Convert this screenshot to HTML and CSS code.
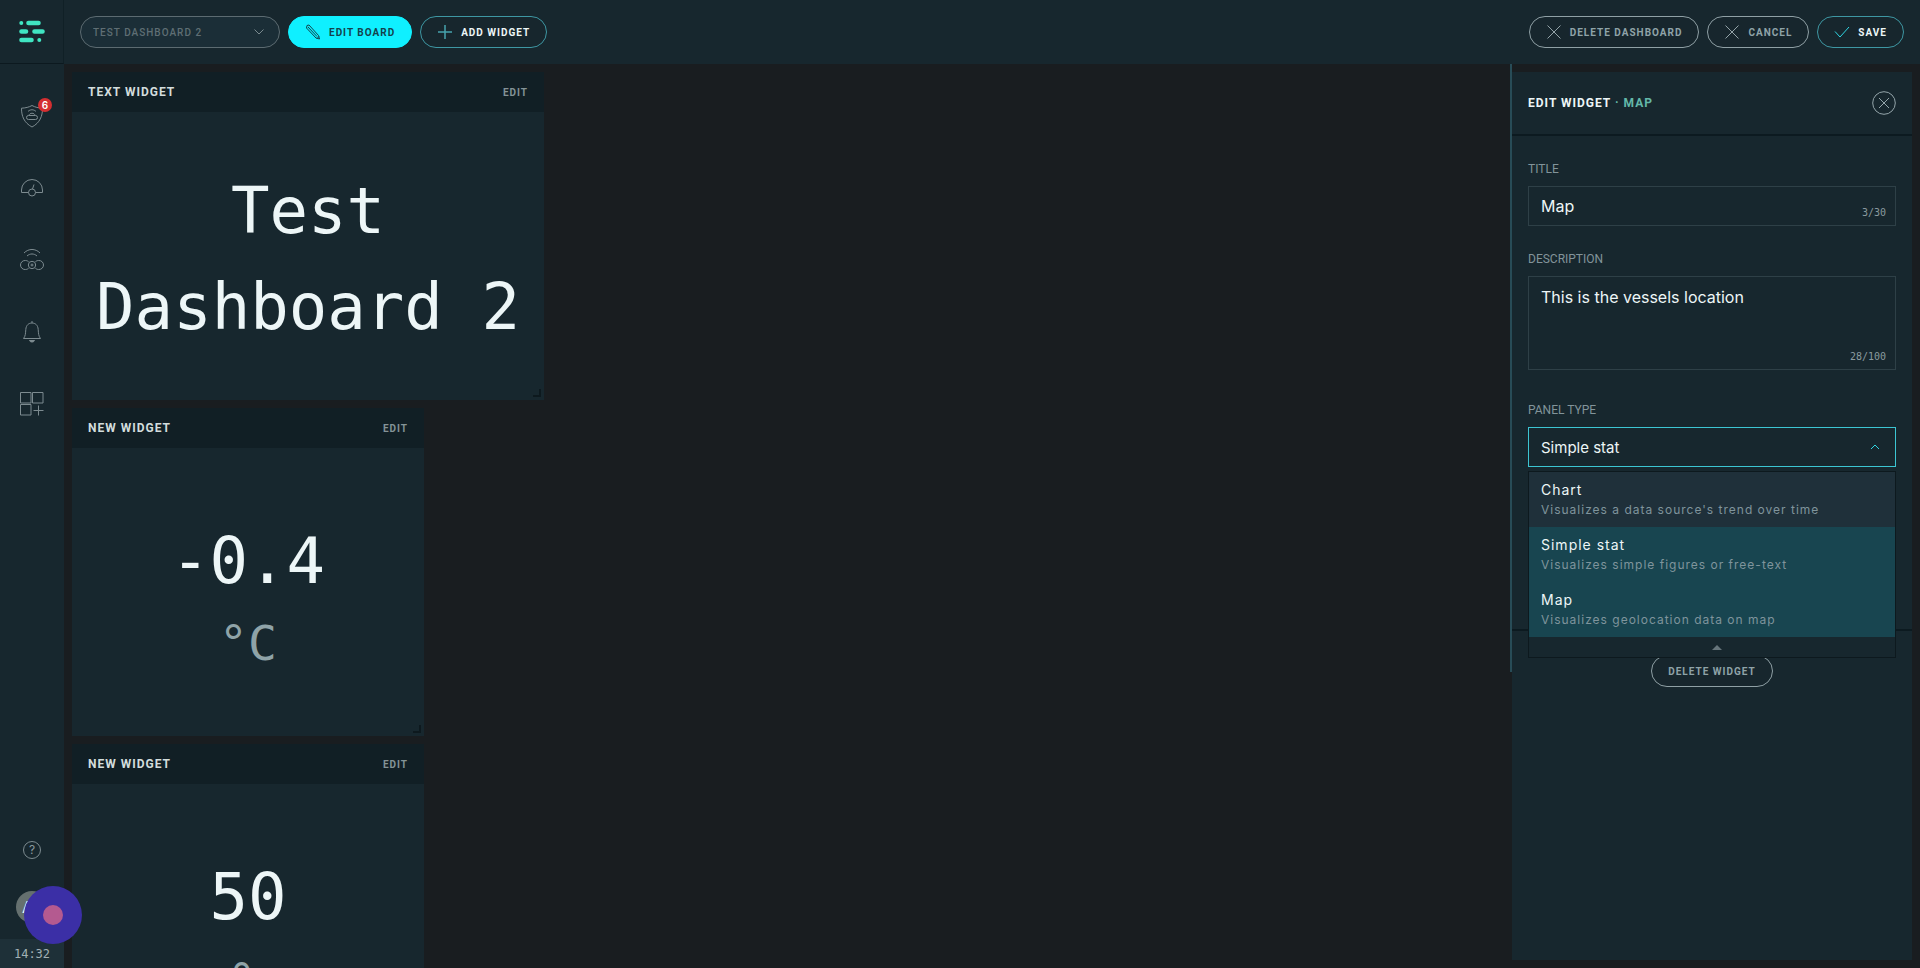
FILE: index.html
```html
<!DOCTYPE html>
<html lang="en">
<head>
<meta charset="utf-8">
<meta name="viewport" content="width=device-width, initial-scale=1">
<title>Test Dashboard 2</title>
<link rel="stylesheet" href="styles.css">
</head>
<body>
<div class="app">
  <aside class="sidebar">
    <a class="logo" href="#" aria-label="Home">
      <svg width="26" height="24" viewBox="0 0 26 24" fill="none" stroke="#40e5c2" stroke-width="4.600" stroke-linecap="round">
        <path d="M9.500 3h10M2.500 11.500h4.500M15.500 11.500h8M2.500 20h10"/>
        <path stroke-width="4" d="M2.300 3h0M20.300 20h0"/>
      </svg>
    </a>
    <nav class="nav" aria-label="Main">
      <a class="nav-link" href="#" aria-label="Security">
        <svg class="icon" width="24" height="24" viewBox="0 0 24 24">
          <path d="M12 1.500C9 3.200 5.500 4 1.500 4.200c0 8 2.500 14.500 10.500 18.800 8-4.300 10.500-10.800 10.500-18.800C18.500 4 15 3.200 12 1.500z"/>
          <rect x="6.500" y="11.500" width="11" height="4" rx="2"/>
          <path d="M9 11.500c.2-3 5.800-3 6 0M8 7.500c2-2.300 6-2.300 8 0"/>
        </svg>
        <span class="badge">6</span>
      </a>
      <a class="nav-link" href="#" aria-label="Performance">
        <svg class="icon" width="24" height="24" viewBox="0 0 24 24">
          <path d="M8.500 16.500H1.500v-2.500a10.500 10.500 0 0 1 21 0v2.500h-7"/>
          <circle cx="12" cy="16.500" r="3.500"/><path d="M12.500 13l1.500-4.500"/>
        </svg>
      </a>
      <a class="nav-link" href="#" aria-label="Devices">
        <svg class="icon" width="24" height="24" viewBox="0 0 24 24">
          <path d="M4 5c4.500-4.700 11.500-4.700 16 0M7 8c3-2.700 7-2.700 10 0"/>
          <path d="M8.500 13.500C6.500 12.300 5.500 12.500 5 12.500a4.500 4.500 0 0 0 0 9c.5 0 1.500.2 3.500-1M15.500 13.500c2-1.200 3-1 3.500-1a4.500 4.500 0 0 1 0 9c-.5 0-1.500.2-3.500-1"/>
          <circle cx="12" cy="17" r="3.700"/><circle cx="12" cy="17" r="1"/>
        </svg>
      </a>
      <a class="nav-link" href="#" aria-label="Alerts">
        <svg class="icon" width="24" height="24" viewBox="0 0 24 24">
          <path d="M3.500 18.500h17c-2-2.500-2-5-2.300-9-.3-4.500-3-6.500-6.200-6.500s-5.900 2-6.200 6.500c-.3 4-.3 6.500-2.300 9zM12 3V1"/>
          <path d="M9.500 20.500c.8 2 4.200 2 5 0z" fill="#7d8b90"/>
        </svg>
      </a>
      <a class="nav-link" href="#" aria-label="Dashboards">
        <svg class="icon" width="24" height="24" viewBox="0 0 24 24">
          <path d="M.5.500h10.500v10.500H.500zM12.500.500h10.500v10.500H12.500zM.5 12.500h10.500v10.500H.500zM18.500 13.500v10M13.500 18.500h10"/>
        </svg>
      </a>
    </nav>
    <div class="side-foot">
      <a class="help" href="#" aria-label="Help">?</a>
      <a class="avatar" href="#" aria-label="Account">A</a>
      <time class="clock">14:32</time>
    </div>
    <button class="record" type="button" aria-label="Record"><span class="record-dot"></span></button>
  </aside>

  <header class="toolbar">
    <div class="board-picker">
      <select class="board-select" aria-label="Dashboard" disabled><option>TEST DASHBOARD 2</option></select>
      <svg class="picker-arrow" width="10" height="6" viewBox="0 0 10 6"><path d="M.5.500l4.500 4.500 4.500-4.500"/></svg>
    </div>
    <button class="btn btn-primary" type="button">
      <svg class="btn-icon" width="16" height="16" viewBox="0 0 16 16"><path d="M2 1.500L4 1l9.500 10.500 1 3.500-3.500-1L1.500 4zM3 3l9 9.500M12 14.500l2-2"/></svg>Edit board</button>
    <button class="btn btn-accent" type="button">
      <svg class="btn-icon" width="16" height="16" viewBox="0 0 16 16"><path d="M8 1v14M1 8h14" stroke-width="1.500"/></svg>Add widget</button>
    <span class="spacer"></span>
    <button class="btn" type="button">
      <svg class="btn-icon" width="16" height="16" viewBox="0 0 16 16"><path d="M1.500 1.500l13 13M14.500 1.500l-13 13"/></svg>Delete dashboard</button>
    <button class="btn" type="button">
      <svg class="btn-icon" width="16" height="16" viewBox="0 0 16 16"><path d="M1.500 1.500l13 13M14.500 1.500l-13 13"/></svg>Cancel</button>
    <button class="btn btn-accent" type="button">
      <svg class="btn-icon btn-icon-bright" width="16" height="16" viewBox="0 0 16 16"><path d="M1 7.500l5 5.500L15 3"/></svg>Save</button>
  </header>

  <main class="board">
    <section class="widget widget-wide">
      <header class="widget-head"><h2 class="widget-title">Text widget</h2><button class="widget-edit" type="button">Edit</button></header>
      <div class="widget-body"><p class="big">Test Dashboard 2</p></div>
    </section>
    <section class="widget">
      <header class="widget-head"><h2 class="widget-title">New widget</h2><button class="widget-edit" type="button">Edit</button></header>
      <div class="widget-body"><p class="big">-0.4</p><p class="unit">°C</p></div>
    </section>
    <section class="widget">
      <header class="widget-head"><h2 class="widget-title">New widget</h2><button class="widget-edit" type="button">Edit</button></header>
      <div class="widget-body"><p class="big">50</p><p class="unit">%</p></div>
    </section>
  </main>

  <aside class="panel">
    <header class="panel-head">
      <h1 class="panel-title">Edit widget <span class="panel-kind">· Map</span></h1>
      <button class="close" type="button" aria-label="Close">
        <svg class="close-icon" width="24" height="24" viewBox="0 0 24 24"><circle cx="12" cy="12" r="11.300"/><path d="M7 7l10 10M17 7L7 17"/></svg>
      </button>
    </header>
    <form class="form">
      <div class="field">
        <label class="label" for="title">Title</label>
        <div class="control"><input class="input" id="title" type="text" value="Map"><span class="count">3/30</span></div>
      </div>
      <div class="field">
        <label class="label" for="description">Description</label>
        <div class="control"><textarea class="input input-area" id="description">This is the vessels location</textarea><span class="count">28/100</span></div>
      </div>
      <div class="field field-type">
        <label class="label" for="type">Panel type</label>
        <div class="control">
          <select class="input input-open" id="type"><option>Chart</option><option selected>Simple stat</option><option>Map</option></select>
          <svg class="type-arrow" width="10" height="6" viewBox="0 0 10 6"><path d="M1 5l4-4 4 4"/></svg>
          <div class="menu">
            <ul class="menu-list" role="listbox" aria-label="Panel type">
              <li class="option" role="option" aria-selected="false"><span class="option-name">Chart</span><span class="option-note">Visualizes a data source's trend over time</span></li>
              <li class="option option-active" role="option" aria-selected="true"><span class="option-name">Simple stat</span><span class="option-note">Visualizes simple figures or free-text</span></li>
              <li class="option option-active" role="option" aria-selected="false"><span class="option-name">Map</span><span class="option-note">Visualizes geolocation data on map</span></li>
            </ul>
            <div class="menu-foot"><svg width="10" height="6" viewBox="0 0 10 6"><path d="M0 6l5-5 5 5z" fill="#66757b"/></svg></div>
          </div>
        </div>
      </div>
    </form>
    <footer class="panel-foot"><button class="btn" type="button">Delete widget</button></footer>
  </aside>
</div>
</body>
</html>
```

FILE: styles.css
```css
* { box-sizing: border-box; }

body {
  margin: 0;
  background: #191d20;
  color: #edf6f7;
  font-family: Inter, "Liberation Sans", sans-serif;
  font-size: 12px;
}

h1, h2, p, ul { margin: 0; padding: 0; }
a { color: inherit; text-decoration: none; }
button, select, input, textarea { font: inherit; color: inherit; }

.app {
  display: grid;
  grid-template-columns: 64px minmax(0, 1fr) 408px;
  grid-template-rows: 64px minmax(0, 1fr);
  height: 100vh;
  overflow: hidden;
}

/* Sidebar */
.sidebar {
  grid-row: 1 / 3;
  position: relative;
  display: flex;
  flex-direction: column;
  background: #17272e;
}
.logo {
  display: flex;
  align-items: center;
  justify-content: center;
  height: 64px;
  border-right: 1px solid #102026;
  border-bottom: 1px solid #0c191f;
}
.nav { padding-top: 16px; }
.nav-link {
  position: relative;
  display: flex;
  align-items: center;
  justify-content: center;
  height: 72px;
}
.icon { fill: none; stroke: #7d8b90; stroke-width: 1; stroke-linejoin: round; }
.badge {
  position: absolute;
  top: 18px;
  right: 12px;
  width: 14px;
  height: 14px;
  border-radius: 50%;
  background: #d42f31;
  color: #fff;
  font-size: 10px;
  font-weight: 600;
  line-height: 14px;
  text-align: center;
}
.side-foot {
  display: flex;
  flex-direction: column;
  align-items: center;
  margin-top: auto;
}
.help {
  width: 18px;
  height: 18px;
  margin-bottom: 32px;
  border: 1px solid #7d8b90;
  border-radius: 50%;
  color: #8b999e;
  line-height: 16px;
  text-align: center;
}
.avatar {
  width: 32px;
  height: 32px;
  margin-bottom: 16px;
  padding-left: 6px;
  border-radius: 50%;
  background: #65706f;
  font-size: 16px;
  line-height: 32px;
}
.clock {
  align-self: stretch;
  height: 29px;
  background: #1e3038;
  color: #a2b0b5;
  font-family: "DejaVu Sans Mono", monospace;
  line-height: 30px;
  text-align: center;
}
.record {
  position: absolute;
  left: 24px;
  bottom: 24px;
  z-index: 2;
  display: flex;
  align-items: center;
  justify-content: center;
  width: 58px;
  height: 58px;
  padding: 0;
  border: 0;
  border-radius: 50%;
  background: #3b2fa6;
}
.record-dot { width: 20px; height: 20px; border-radius: 50%; background: #b45a90; }

/* Toolbar */
.toolbar {
  grid-column: 2 / 4;
  display: flex;
  align-items: center;
  gap: 8px;
  padding: 0 16px;
  background: #17272e;
}
.spacer { flex: 1; }
.board-picker { position: relative; }
.board-select {
  appearance: none;
  display: block;
  width: 200px;
  height: 32px;
  padding: 0 32px 0 12px;
  border: 1px solid #5c6b71;
  border-radius: 16px;
  background: #1b2e37;
  color: #5f6e74;
  font-family: Roboto, sans-serif;
  font-size: 10px;
  font-weight: 500;
  letter-spacing: 1px;
  opacity: 1;
}
.picker-arrow { position: absolute; top: 13px; right: 16px; fill: none; stroke: #7a898e; }
.btn {
  display: flex;
  align-items: center;
  gap: 8px;
  height: 32px;
  padding: 0 16px;
  border: 1px solid #8fa0a5;
  border-radius: 16px;
  background: #17262d;
  color: #8fa3a8;
  font-family: Roboto, sans-serif;
  font-size: 10px;
  font-weight: 700;
  letter-spacing: 1px;
  text-transform: uppercase;
  white-space: nowrap;
}
.btn-icon { fill: none; stroke: #93a3a8; }
.btn-primary { border-color: #0ff0ff; background: #0ff0ff; color: #14424d; }
.btn-primary .btn-icon { stroke: #14424d; }
.btn-accent { border-color: #3e97a3; color: #edf6f7; }
.btn-accent .btn-icon { stroke: #47a3ad; }
.btn-accent .btn-icon-bright { stroke: #2fd5e2; }

/* Board */
.board {
  display: flex;
  flex-direction: column;
  align-items: flex-start;
  gap: 8px;
  padding: 8px;
  overflow: hidden;
}
.widget {
  position: relative;
  flex: none;
  display: flex;
  flex-direction: column;
  width: 352px;
  height: 328px;
  background: #17272e;
}
.widget-wide { width: 472px; }
.widget::after {
  content: "";
  position: absolute;
  right: 3px;
  bottom: 3px;
  width: 6px;
  height: 6px;
  border-right: 2px solid #0d191e;
  border-bottom: 2px solid #0d191e;
}
.widget-head {
  display: flex;
  align-items: center;
  justify-content: space-between;
  height: 40px;
  padding: 0 16px;
  background: #111f25;
}
.widget-title { color: #d3dddd; font-family: Roboto, sans-serif; font-size: 12px; font-weight: 700; letter-spacing: 1px; text-transform: uppercase; }
.widget-edit {
  padding: 0;
  border: 0;
  background: none;
  color: #849397;
  font-family: Roboto, sans-serif;
  font-size: 10px;
  font-weight: 700;
  letter-spacing: 1px;
  text-transform: uppercase;
}
.widget-body {
  flex: 1;
  display: flex;
  flex-direction: column;
  align-items: center;
  justify-content: center;
  padding: 6px 24px 0;
  font-family: "DejaVu Sans Mono", monospace;
  text-align: center;
}
.big { font-size: 64px; line-height: 96px; }
.unit { color: #8fa3a8; font-size: 48px; line-height: 68px; }

/* Edit panel */
.panel {
  position: relative;
  display: flex;
  flex-direction: column;
  margin: 8px 8px 8px 0;
  background: #17272e;
}
.panel::before {
  content: "";
  position: absolute;
  top: -8px;
  left: -2px;
  width: 2px;
  height: 608px;
  background: #284c57;
}
.panel-head {
  display: flex;
  align-items: center;
  justify-content: space-between;
  height: 64px;
  padding: 0 16px;
  border-bottom: 2px solid #0c1a20;
}
.panel-title { font-family: Roboto, sans-serif; font-size: 12px; font-weight: 700; letter-spacing: 1px; text-transform: uppercase; }
.panel-kind { color: #63b8a9; }
.close { display: flex; padding: 0; border: 0; background: none; }
.close-icon { fill: none; stroke: #94a5aa; }
.form { padding: 24px 16px 0; }
.field { margin-bottom: 24px; }
.label { display: block; margin-bottom: 8px; color: #82949a; font-family: Roboto, sans-serif; line-height: 18px; text-transform: uppercase; }
.control { position: relative; }
.input {
  display: block;
  width: 100%;
  height: 40px;
  padding: 0 12px;
  border: 1px solid #2e4047;
  border-radius: 0;
  outline: 0;
  background: transparent;
  font-size: 16px;
}
.input-area { height: 94px; padding: 8px 12px; line-height: 24px; resize: none; }
.input-open { appearance: none; border-color: #3cc5d3; font-size: 15px; }
.count {
  position: absolute;
  right: 10px;
  bottom: 8px;
  color: #8a9a9f;
  font-family: "DejaVu Sans Mono", monospace;
  font-size: 10px;
}
.type-arrow { position: absolute; top: 17px; right: 16px; fill: none; stroke: #2fd5e2; stroke-width: 1; }
.menu {
  position: absolute;
  top: 44px;
  left: 0;
  right: 0;
  z-index: 1;
  border: 1px solid #0d191e;
  background: #17272e;
}
.menu-list { list-style: none; }
.option { display: flex; flex-direction: column; height: 55px; padding: 8px 12px; background: #1f303a; letter-spacing: 1px; }
.option-active { background: #184550; }
.option-name { font-size: 14px; line-height: 20px; }
.option-note { color: #7f949c; line-height: 20px; }
.menu-foot { display: flex; align-items: center; justify-content: center; height: 20px; padding-left: 10px; }
.panel-foot { display: flex; justify-content: center; padding-top: 24px; border-top: 2px solid #0c1a20; }
.field-type { margin: 31px 0 0; padding-bottom: 162px; }
```
